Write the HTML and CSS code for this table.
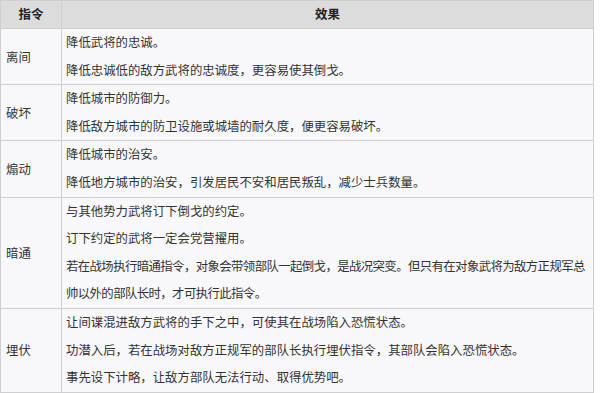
FILE: index.html
```html
<!DOCTYPE html>
<html lang="zh-CN">
<head>
<meta charset="utf-8">
<link rel="stylesheet" href="styles.css">
</head>
<body>
<table class="cmd-table">
  <thead>
    <tr>
      <th class="col-name">指令</th>
      <th class="col-effect">效果</th>
    </tr>
  </thead>
  <tbody>
    <tr>
      <td class="name">离间</td>
      <td class="effect">
        <p>降低武将的忠诚。</p>
        <p>降低忠诚低的敌方武将的忠诚度，更容易使其倒戈。</p>
      </td>
    </tr>
    <tr>
      <td class="name">破坏</td>
      <td class="effect">
        <p>降低城市的防御力。</p>
        <p>降低敌方城市的防卫设施或城墙的耐久度，便更容易破坏。</p>
      </td>
    </tr>
    <tr>
      <td class="name">煽动</td>
      <td class="effect">
        <p>降低城市的治安。</p>
        <p>降低地方城市的治安，引发居民不安和居民叛乱，减少士兵数量。</p>
      </td>
    </tr>
    <tr>
      <td class="name">暗通</td>
      <td class="effect">
        <p>与其他势力武将订下倒戈的约定。</p>
        <p>订下约定的武将一定会党营擢用。</p>
        <p class="tight">若在战场执行暗通指令，对象会带领部队一起倒戈，是战况突变。但只有在对象武将为敌方正规军总帅以外的部队长时，才可执行此指令。</p>
      </td>
    </tr>
    <tr>
      <td class="name">埋伏</td>
      <td class="effect">
        <p>让间谍混进敌方武将的手下之中，可使其在战场陷入恐慌状态。</p>
        <p>功潜入后，若在战场对敌方正规军的部队长执行埋伏指令，其部队会陷入恐慌状态。</p>
        <p>事先设下计略，让敌方部队无法行动、取得优势吧。</p>
      </td>
    </tr>
  </tbody>
</table>
</body>
</html>
```

FILE: styles.css
```css
html, body {
  margin: 0;
  padding: 0;
  background: #ffffff;
}

body {
  font-family: "Noto Sans CJK SC", "Noto Sans", sans-serif;
  color: #333333;
}

.cmd-table {
  width: 594px;
  border-collapse: collapse;
  background: #f8f8fa;
  font-size: 12.4px;
}

.cmd-table th,
.cmd-table td {
  border: 1px solid #cfcfcf;
}

.cmd-table th {
  background: #dcdcdc;
  height: 27px;
  padding: 0;
  font-weight: bold;
  color: #222222;
  text-align: center;
  line-height: 27px;
}

.col-name {
  width: 60px;
}

.name {
  padding: 0 0 0 5px;
  vertical-align: middle;
  text-align: left;
}

.effect {
  padding: 0 3px 0 4px;
  vertical-align: top;
}

.effect p {
  margin: 0;
  line-height: 27.6px;
}

.effect p.tight {
  letter-spacing: -0.6px;
}
```
